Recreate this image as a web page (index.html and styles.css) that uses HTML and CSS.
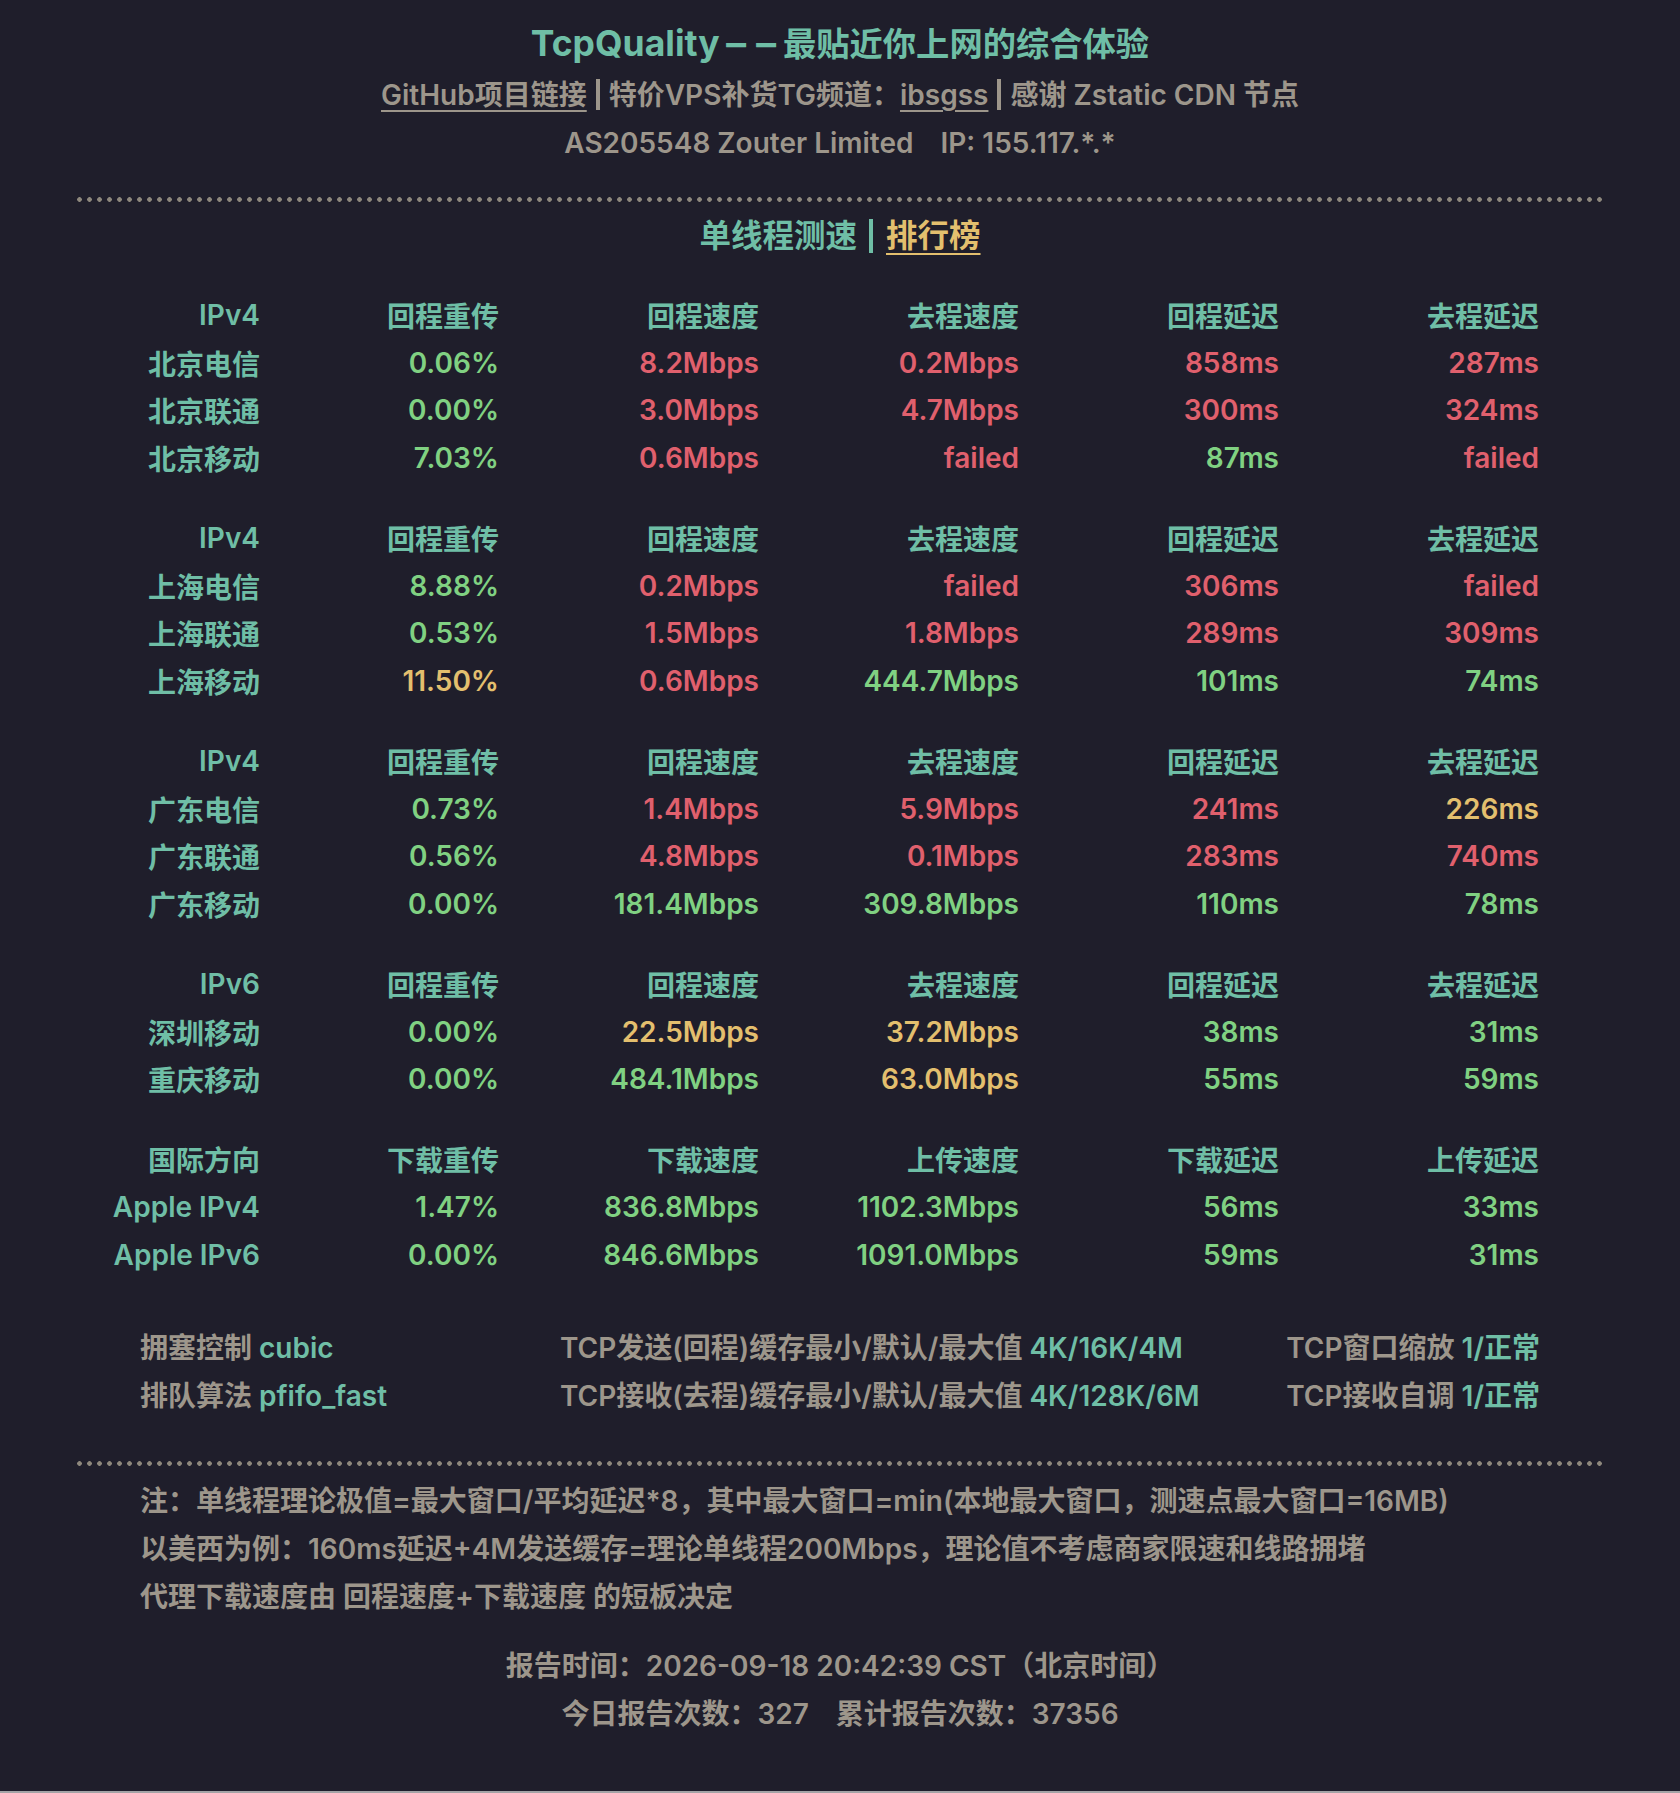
FILE: index.html
```html
<!DOCTYPE html>
<html lang="zh-CN">
<head>
<meta charset="utf-8">
<title>TcpQuality</title>
<link rel="stylesheet" href="styles.css">
</head>
<body>
<div class="page">
  <header class="head">
    <h1 class="title"><span class="title-en">TcpQuality</span><span class="dash">--</span>最贴近你上网的综合体验</h1>
    <p class="line links"><a class="ulink">GitHub项目链接</a><span class="sep"></span>特价VPS补货TG频道：<a class="ulink">ibsgss</a><span class="sep"></span>感谢 Zstatic CDN 节点</p>
    <p class="line">AS205548 Zouter Limited<span class="gap"></span>IP: 155.117.*.*</p>
  </header>

  <div class="dots"></div>

  <nav class="nav"><span class="nav-cur">单线程测速</span><span class="sep sep-teal"></span><a class="nav-link">排行榜</a></nav>

  <section class="results">
    <div class="grp">
      <div class="h">IPv4</div><div class="h">回程重传</div><div class="h">回程速度</div><div class="h">去程速度</div><div class="h">回程延迟</div><div class="h">去程延迟</div>
      <div class="h">北京电信</div><div class="g">0.06%</div><div class="r">8.2Mbps</div><div class="r">0.2Mbps</div><div class="r">858ms</div><div class="r">287ms</div>
      <div class="h">北京联通</div><div class="g">0.00%</div><div class="r">3.0Mbps</div><div class="r">4.7Mbps</div><div class="r">300ms</div><div class="r">324ms</div>
      <div class="h">北京移动</div><div class="g">7.03%</div><div class="r">0.6Mbps</div><div class="r">failed</div><div class="g">87ms</div><div class="r">failed</div>
    </div>
    <div class="grp">
      <div class="h">IPv4</div><div class="h">回程重传</div><div class="h">回程速度</div><div class="h">去程速度</div><div class="h">回程延迟</div><div class="h">去程延迟</div>
      <div class="h">上海电信</div><div class="g">8.88%</div><div class="r">0.2Mbps</div><div class="r">failed</div><div class="r">306ms</div><div class="r">failed</div>
      <div class="h">上海联通</div><div class="g">0.53%</div><div class="r">1.5Mbps</div><div class="r">1.8Mbps</div><div class="r">289ms</div><div class="r">309ms</div>
      <div class="h">上海移动</div><div class="y">11.50%</div><div class="r">0.6Mbps</div><div class="g">444.7Mbps</div><div class="g">101ms</div><div class="g">74ms</div>
    </div>
    <div class="grp">
      <div class="h">IPv4</div><div class="h">回程重传</div><div class="h">回程速度</div><div class="h">去程速度</div><div class="h">回程延迟</div><div class="h">去程延迟</div>
      <div class="h">广东电信</div><div class="g">0.73%</div><div class="r">1.4Mbps</div><div class="r">5.9Mbps</div><div class="r">241ms</div><div class="y">226ms</div>
      <div class="h">广东联通</div><div class="g">0.56%</div><div class="r">4.8Mbps</div><div class="r">0.1Mbps</div><div class="r">283ms</div><div class="r">740ms</div>
      <div class="h">广东移动</div><div class="g">0.00%</div><div class="g">181.4Mbps</div><div class="g">309.8Mbps</div><div class="g">110ms</div><div class="g">78ms</div>
    </div>
    <div class="grp">
      <div class="h">IPv6</div><div class="h">回程重传</div><div class="h">回程速度</div><div class="h">去程速度</div><div class="h">回程延迟</div><div class="h">去程延迟</div>
      <div class="h">深圳移动</div><div class="g">0.00%</div><div class="y">22.5Mbps</div><div class="y">37.2Mbps</div><div class="g">38ms</div><div class="g">31ms</div>
      <div class="h">重庆移动</div><div class="g">0.00%</div><div class="g">484.1Mbps</div><div class="y">63.0Mbps</div><div class="g">55ms</div><div class="g">59ms</div>
    </div>
    <div class="grp">
      <div class="h">国际方向</div><div class="h">下载重传</div><div class="h">下载速度</div><div class="h">上传速度</div><div class="h">下载延迟</div><div class="h">上传延迟</div>
      <div class="h">Apple IPv4</div><div class="g">1.47%</div><div class="g">836.8Mbps</div><div class="g">1102.3Mbps</div><div class="g">56ms</div><div class="g">33ms</div>
      <div class="h">Apple IPv6</div><div class="g">0.00%</div><div class="g">846.6Mbps</div><div class="g">1091.0Mbps</div><div class="g">59ms</div><div class="g">31ms</div>
    </div>
  </section>

  <section class="sys">
    <div>拥塞控制 <span class="v">cubic</span></div>
    <div>TCP发送(回程)缓存最小/默认/最大值 <span class="v">4K/16K/4M</span></div>
    <div class="right">TCP窗口缩放 <span class="v">1/正常</span></div>
    <div>排队算法 <span class="v">pfifo_fast</span></div>
    <div>TCP接收(去程)缓存最小/默认/最大值 <span class="v">4K/128K/6M</span></div>
    <div class="right">TCP接收自调 <span class="v">1/正常</span></div>
  </section>

  <div class="dots dots-2"></div>

  <section class="notes">
    <p>注：单线程理论极值=最大窗口/平均延迟*8，其中最大窗口=min(本地最大窗口，测速点最大窗口=16MB)</p>
    <p>以美西为例：160ms延迟+4M发送缓存=理论单线程200Mbps，理论值不考虑商家限速和线路拥堵</p>
    <p>代理下载速度由 回程速度+下载速度 的短板决定</p>
  </section>

  <footer class="report">
    <p>报告时间：2026-09-18 20:42:39 CST（北京时间）</p>
    <p>今日报告次数：327<span class="gap"></span>累计报告次数：37356</p>
  </footer>
</div>
</body>
</html>
```
FILE: styles.css
```css
html {
  background: #a3a3a6;
}
body {
  margin: 0;
  background: #1f1e2b;
  height: 1791px;
  font-family: Inter, "Noto Sans CJK SC", sans-serif;
  font-weight: 600;
  font-size: 28px;
  color: #9d968b;
}
.page {
  padding-top: 17px;
}
p { margin: 0; }
.head {
  text-align: center;
}
.title {
  margin: 0;
  font-size: 33.3px;
  line-height: 54px;
  font-weight: 700;
  color: #6fbea6;
}
.title-en {
  font-size: 35.5px;
  line-height: 1;
}
.dash {
  display: inline-block;
  font-size: 35.5px;
  line-height: 1;
  letter-spacing: 1px;
  transform: scaleX(1.7);
  transform-origin: left center;
  margin-left: 2px;
  margin-right: 26px;
}
.line {
  line-height: 48px;
}
.ulink {
  color: #9d968b;
  text-decoration: underline;
  text-decoration-thickness: 2px;
  text-underline-offset: 5px;
}
.sep {
  display: inline-block;
  width: 4px;
  height: 31px;
  background: #9d968b;
  vertical-align: -5px;
  margin: 0 9px;
}
.gap {
  display: inline-block;
  width: 27px;
}
.dots {
  width: 1526px;
  height: 5px;
  margin: 30px auto 0;
  background-image: radial-gradient(circle at 2.5px 2.5px, #8e887d 2px, transparent 2.6px);
  background-size: 10px 5px;
  background-repeat: repeat-x;
}
.nav {
  margin-top: 10px;
  line-height: 48px;
  text-align: center;
  font-size: 31.5px;
  color: #6fbea6;
}
.sep-teal {
  background: #6fbea6;
  height: 34px;
  vertical-align: -6px;
  margin: 0 13px 0 12px;
}
.nav-link {
  color: #e3bf6e;
  text-decoration: underline;
  text-decoration-thickness: 2px;
  text-underline-offset: 6px;
}
.results {
  width: 1400px;
  margin: 31px auto 0;
  display: flex;
  flex-direction: column;
  gap: 32px;
}
.grp {
  display: grid;
  grid-template-columns: 120px 239px repeat(4, 260px);
  grid-auto-rows: 47.75px;
  align-items: center;
  text-align: right;
  white-space: nowrap;
}
.grp > div {
  justify-self: end;
  justify-self: unsafe end;
}
.h { color: #6fbea6; }
.g { color: #80d182; }
.r { color: #e0606d; }
.y { color: #e3bf6e; }
.sys {
  width: 1400px;
  margin: 43px auto 0;
  display: grid;
  grid-template-columns: 420px 1fr auto;
  grid-auto-rows: 48px;
  align-items: center;
  white-space: nowrap;
}
.sys .v { color: #6fbea6; }
.sys .right { text-align: right; }
.dots-2 {
  margin-top: 43px;
}
.notes {
  width: 1400px;
  margin: 11px auto 0;
  line-height: 48px;
}
.report {
  margin-top: 21px;
  text-align: center;
  line-height: 48px;
}
```
